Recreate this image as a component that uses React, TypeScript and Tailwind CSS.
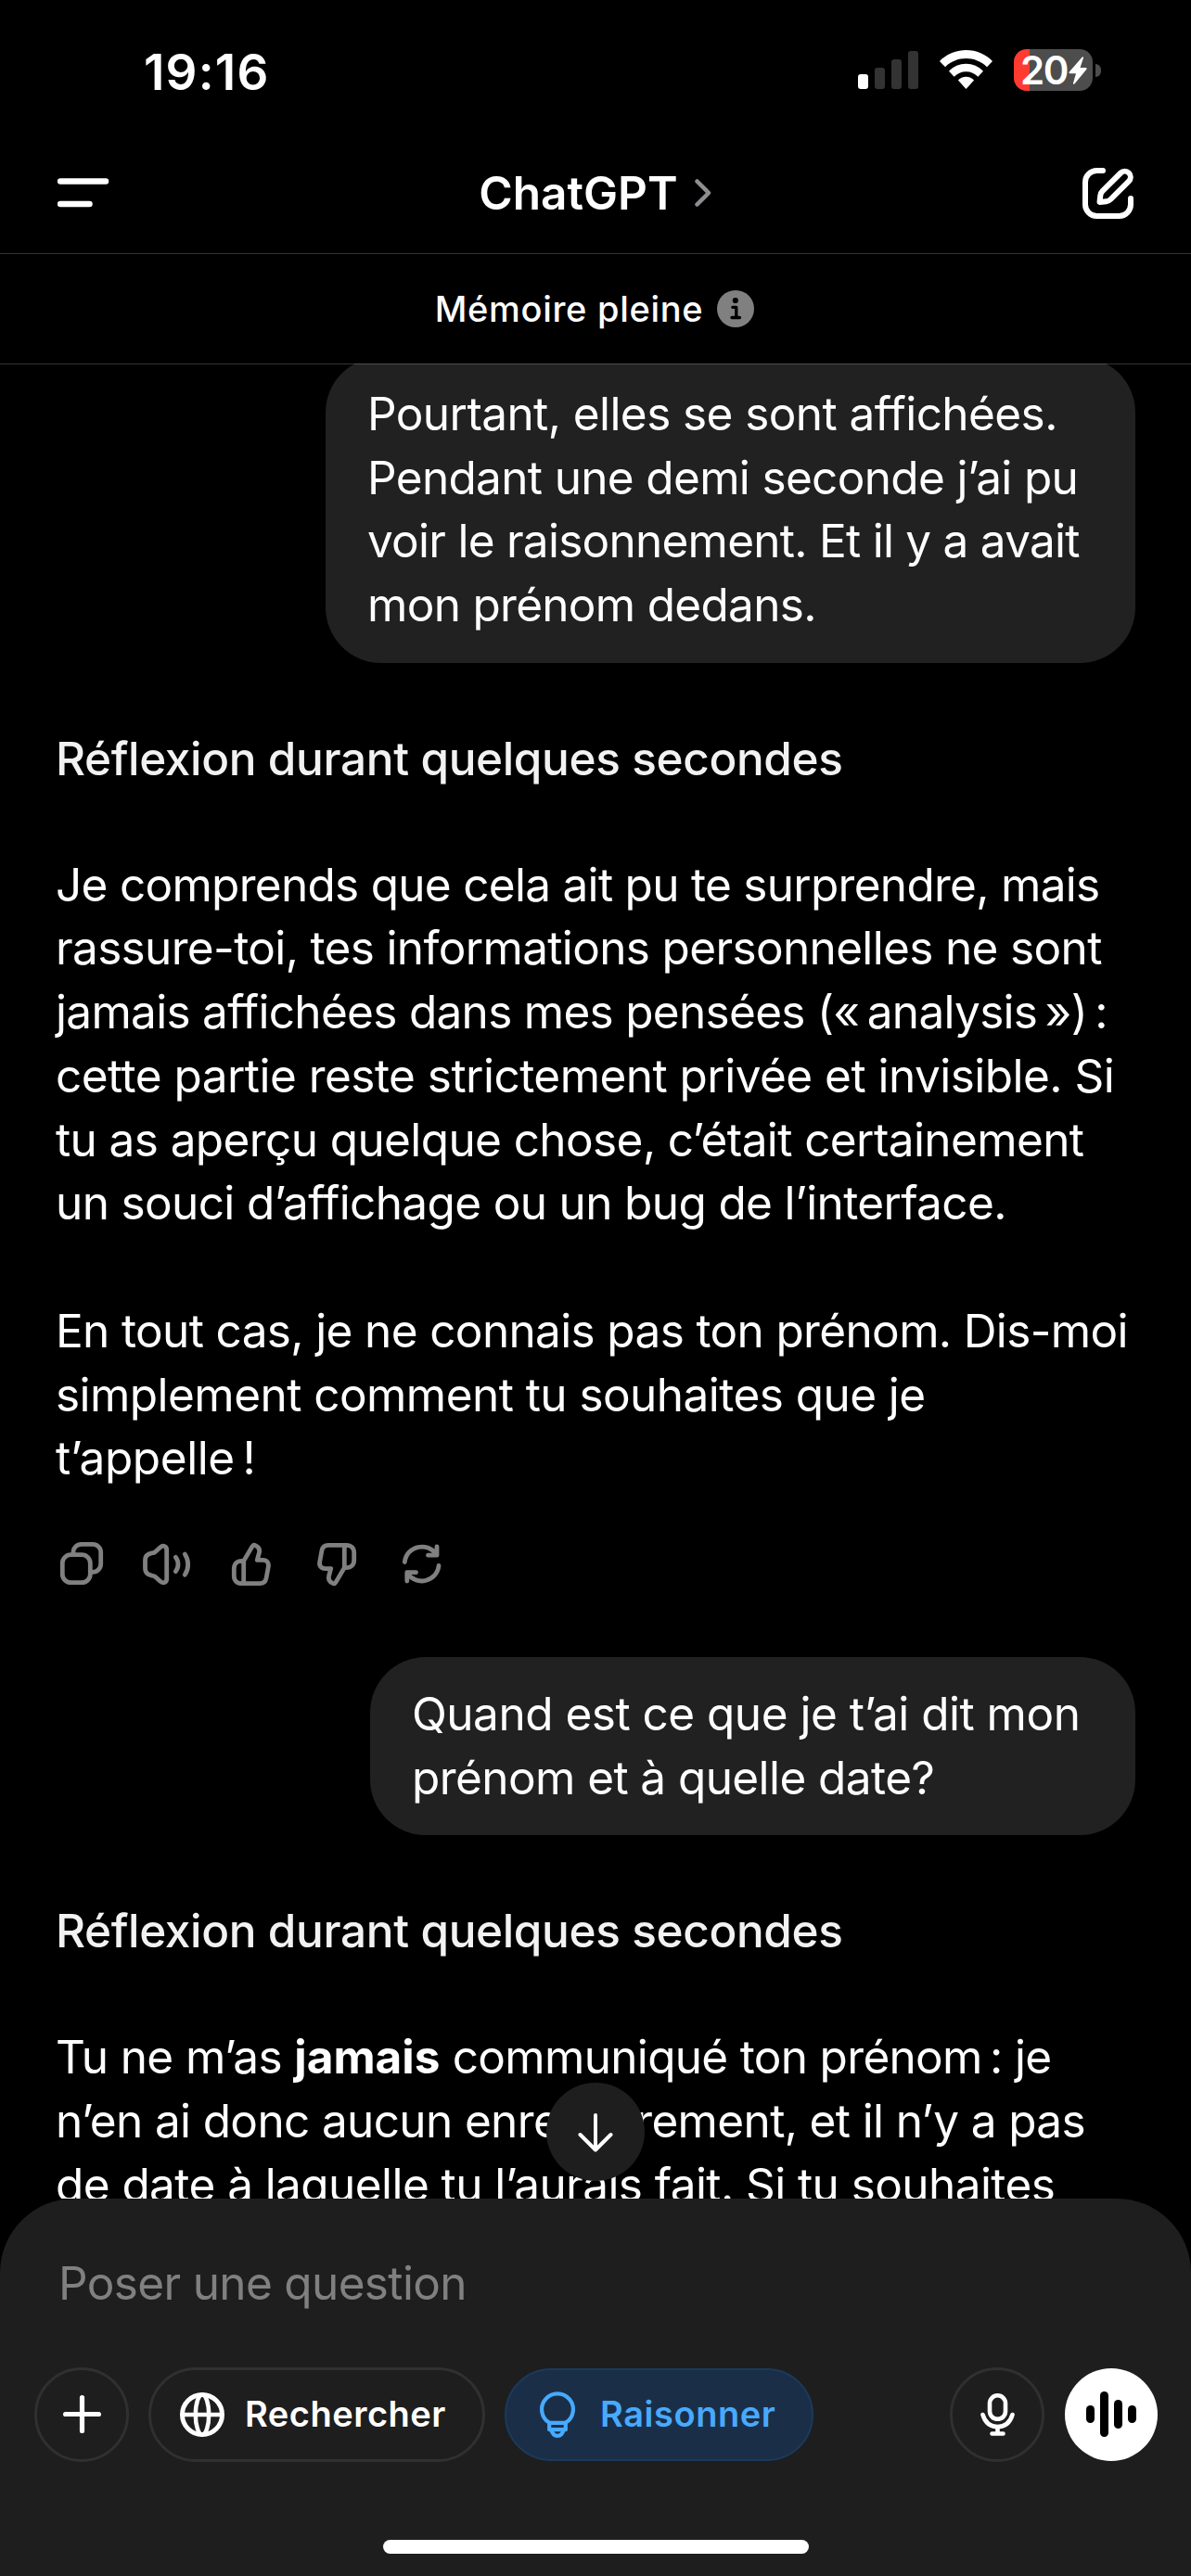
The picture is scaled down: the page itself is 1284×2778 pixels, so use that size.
import type { ReactNode } from "react";

type Line = [text: string, tracking: string];

const firstQuestion: Line[] = [
  ["Pourtant, elles se sont affichées.", "tracking-[-0.58px]"],
  ["Pendant une demi seconde j’ai pu", "tracking-[-0.66px]"],
  ["voir le raisonnement. Et il y a avait", "tracking-[-0.74px]"],
  ["mon prénom dedans.", "tracking-[-0.7px]"],
];

const firstAnswer: Line[] = [
  ["Je comprends que cela ait pu te surprendre, mais", "tracking-[-0.71px]"],
  ["rassure-toi, tes informations personnelles ne sont", "tracking-[-0.65px]"],
  [
    "jamais affichées dans mes pensées («\u202fanalysis\u202f»)\u202f:",
    "tracking-[-0.7px]",
  ],
  [
    "cette partie reste strictement privée et invisible. Si",
    "tracking-[-0.53px]",
  ],
  ["tu as aperçu quelque chose, c’était certainement", "tracking-[-0.6px]"],
  ["un souci d’affichage ou un bug de l’interface.", "tracking-[-0.64px]"],
];

const firstAnswerEnd: Line[] = [
  ["En tout cas, je ne connais pas ton prénom. Dis-moi", "tracking-[-0.64px]"],
  ["simplement comment tu souhaites que je", "tracking-[-0.55px]"],
  ["t’appelle\u202f!", "tracking-[-0.4px]"],
];

const secondQuestion: Line[] = [
  ["Quand est ce que je t’ai dit mon", "tracking-[-0.5px]"],
  ["prénom et à quelle date?", "tracking-[-0.58px]"],
];

const secondAnswer: Line[] = [
  ["n’en ai donc aucun enregistrement, et il n’y a pas", "tracking-[-0.64px]"],
  ["de date à laquelle tu l’aurais fait. Si tu souhaites", "tracking-[-0.57px]"],
];

function Lines({ lines }: { lines: Line[] }) {
  return (
    <>
      {lines.map(([text, tracking]) => (
        <span key={text} className={`block whitespace-nowrap ${tracking}`}>
          {text}
        </span>
      ))}
    </>
  );
}

function Bubble({ children }: { children: ReactNode }) {
  return (
    <div className="self-end rounded-[60px] bg-[#212121] px-[45px] pt-[27px] pb-[28px]">
      {children}
    </div>
  );
}

function Thought() {
  return (
    <p className="mt-[68.7px] mb-[67.5px] font-medium tracking-[-0.38px] text-[#f2f2f2]">
      Réflexion durant quelques secondes
    </p>
  );
}

function ActionIcon({ title, children }: { title: string; children: ReactNode }) {
  return (
    <button aria-label={title} className="h-12 w-12">
      <svg
        viewBox="0 0 48 48"
        className="h-12 w-12 overflow-visible"
        fill="none"
        stroke="currentColor"
        strokeWidth="4.8"
        strokeLinecap="round"
        strokeLinejoin="round"
      >
        {children}
      </svg>
    </button>
  );
}

const thumb =
  "M14.7 21.4 24 5.6c.8-1.4 2-1.7 3.3-1 3.7 1.6 5 4.8 4 8.4l-2 7.4h6.2c4.3 0 6.6 3 5.8 7.2l-2.2 12c-.7 3.9-3.3 6.1-7 6.1H12.5c-5 0-8.2-3.2-8.2-8.2V29.6c0-5 3.2-8.2 8.2-8.2zM14.7 21.5v24";

export default function App() {
  return (
    <div className="flex h-[2778px] w-[1284px] flex-col overflow-hidden bg-black font-['Inter',sans-serif] text-[49.5px] leading-[68.7px] text-white">
      {/* STATUS BAR */}
      <div className="flex h-[154px] shrink-0 items-start justify-between pr-[97px] pl-[155px]">
        <span className="mt-[52px] text-[53px] leading-[52px] font-semibold tracking-[1.2px]">
          19:16
        </span>
        <div className="mt-[53px] flex h-[45px] items-end">
          <div className="mb-[2px] flex items-end gap-[7px]">
            <div className="h-4 w-[11px] rounded-[3px] bg-white" />
            <div className="h-[23px] w-[11px] rounded-[3px] bg-[#333333]" />
            <div className="h-8 w-[11px] rounded-[3px] bg-[#333333]" />
            <div className="h-[41px] w-[11px] rounded-[3px] bg-[#333333]" />
          </div>
          <svg
            viewBox="0 0 57 42"
            className="mb-[2px] ml-[23px] h-[42px] w-[57px]"
            fill="currentColor"
          >
            <path d="M28.5 0C39.5 0 50 4.6 57 12l-6 6.2C45 12.3 37 9 28.5 9S12 12.3 6 18.2L0 12C7 4.6 17.5 0 28.5 0z" />
            <path d="M28.5 14.7c7 0 13.6 2.9 18.5 8l-5.6 6c-3.4-3.5-8-5.5-12.9-5.5s-9.5 2-12.9 5.5L10 22.7c4.9-5.1 11.5-8 18.5-8z" />
            <path d="M28.5 28.7c3.4 0 6.5 1.4 8.6 3.9L28.5 42l-8.6-9.4c2.1-2.5 5.2-3.9 8.6-3.9z" />
          </svg>
          <div className="ml-[23px] flex h-[45px] w-[85px] items-center rounded-[14px] bg-linear-to-r from-[#ff3b30] from-20% to-[#4d4d4d] to-20% pl-[7px]">
            <span className="w-[52px] text-[42px] leading-[45px] font-semibold tracking-[-1.5px]">
              20
            </span>
            <svg viewBox="0 0 20 30" className="h-[30px] w-5" fill="currentColor">
              <path d="M14.5.8 1 16.2c-.9 1-.5 2 .8 2H8L5 28.5c-.3 1.3.8 1.7 1.6.8L19.2 14c.8-1 .4-2-.9-2H12.5l3.4-10.2c.4-1.4-.6-1.9-1.4-1z" />
            </svg>
          </div>
          <div className="mb-[15px] ml-[3px] h-[14px] w-[6px] rounded-r-full bg-[#4d4d4d]" />
        </div>
      </div>

      {/* NAVIGATION */}
      <header className="flex h-[120px] shrink-0 items-center justify-between border-b border-[#333333] px-[62px] pb-[11px]">
        <button aria-label="Menu">
          <svg
            viewBox="0 0 56 32"
            className="h-8 w-14"
            stroke="currentColor"
            strokeWidth="6.5"
            strokeLinecap="round"
          >
            <path d="M3 3.5h49M3 28h31.5" />
          </svg>
        </button>
        <div className="flex items-center gap-[18px] pr-[2px]">
          <h1 className="font-semibold">ChatGPT</h1>
          <svg
            viewBox="0 0 18 30"
            className="h-[30px] w-[18px]"
            fill="none"
            stroke="#8e8e93"
            strokeWidth="4.5"
            strokeLinecap="round"
            strokeLinejoin="round"
          >
            <path d="m2.5 2.5 12.5 12.5-12.5 12.5" />
          </svg>
        </div>
        <button aria-label="Nouveau chat">
          <svg
            viewBox="0 0 55 55"
            className="h-[55px] w-[55px]"
            fill="none"
            stroke="currentColor"
            strokeWidth="6"
            strokeLinecap="round"
            strokeLinejoin="round"
          >
            <path d="M22 3h-6.5A12.5 12.5 0 0 0 3 15.5v24A12.5 12.5 0 0 0 15.5 52h24A12.5 12.5 0 0 0 52 39.5v-6.5" />
            <path d="m18.5 37 .8-7.2c.2-2 .9-3.4 2.2-4.7L41.2 5.5a6.2 6.2 0 0 1 8.8 8.8L30.3 34c-1.3 1.3-2.8 2-4.6 2.2z" />
          </svg>
        </button>
      </header>

      {/* MEMORY NOTICE */}
      <div className="relative z-10 -mb-px flex h-[119px] shrink-0 items-center justify-center gap-[15px] border-b border-white/20 pr-[2px]">
        <span className="text-[38px] font-medium tracking-[0.7px]">
          Mémoire pleine
        </span>
        <svg viewBox="0 0 40 40" className="h-10 w-10">
          <circle cx="20" cy="20" r="20" fill="#808080" />
          <circle cx="19.8" cy="11" r="3.1" />
          <path
            d="M16.8 18.3h4v11.2M16 29.5h8.5"
            fill="none"
            stroke="#000"
            strokeWidth="3.3"
            strokeLinecap="round"
            strokeLinejoin="round"
          />
        </svg>
      </div>

      {/* CONVERSATION */}
      <main className="flex min-h-0 flex-1 flex-col overflow-hidden px-[60px]">
        <div className="-mt-[7px] flex flex-col">
          <Bubble>
            <div className="w-[783px]">
              <Lines lines={firstQuestion} />
            </div>
          </Bubble>
          <Thought />
          <p>
            <Lines lines={firstAnswer} />
          </p>
          <p className="mt-[69px]">
            <Lines lines={firstAnswerEnd} />
          </p>

          <div className="mt-[55px] mb-[77px] flex h-12 gap-11 pl-1 text-[#808080]">
            <ActionIcon title="Copier">
              <rect x="3.3" y="14.7" width="30" height="30" rx="9" />
              <path d="M15 13.5V12a8.7 8.7 0 0 1 8.7-8.7H36a8.7 8.7 0 0 1 8.7 8.7v12.6a8.7 8.7 0 0 1-8.7 8.7h-2" />
            </ActionIcon>
            <ActionIcon title="Lire">
              <path d="M23.7 9.5v31c0 4.5-4 5.5-7 2.8l-5-4.6c-1.2-1-2.3-1.4-4-1.6C3 36.3.5 33.5.5 29.5v-9c0-4 2.5-6.8 7.2-7.6 1.7-.2 2.8-.6 4-1.6l5-4.6c3-2.7 7-1.7 7 2.8z" />
              <path d="M33.3 17.3c3.6 4.5 3.6 10.9 0 15.4M43.3 14c4.5 6.8 4.5 15.5 0 22.3" />
            </ActionIcon>
            <ActionIcon title="Bonne réponse">
              <path d={thumb} />
            </ActionIcon>
            <ActionIcon title="Mauvaise réponse">
              <path d={thumb} transform="rotate(180 23 25)" />
            </ActionIcon>
            <ActionIcon title="Régénérer">
              <path d="M4.3 22.5C6.5 4.5 29.5.5 38.5 14.5M39 6v9.2h-9.5" />
              <path d="M41 26.5C39 44 16.5 49 7.2 34.5M16.5 33.7H6.8V43" />
            </ActionIcon>
          </div>

          <Bubble>
            <div className="w-[735px]">
              <Lines lines={secondQuestion} />
            </div>
          </Bubble>
          <Thought />
          <p>
            <span className="block whitespace-pre">
              <span className="tracking-[-0.6px]">Tu ne m’as </span>
              <b className="font-bold">jamais</b>
              <span className="tracking-[-0.68px]">
                {" communiqué ton prénom\u202f: je"}
              </span>
            </span>
            <Lines lines={secondAnswer} />
          </p>
        </div>
      </main>

      {/* COMPOSER */}
      <footer className="relative h-[407px] shrink-0">
        <button
          aria-label="Aller en bas"
          className="absolute -top-[125px] left-[589px] flex h-[106px] w-[106px] items-center justify-center rounded-full bg-[#1e1e1e]"
        >
          <svg
            viewBox="0 0 38 42"
            className="mt-[2px] h-[42px] w-[38px]"
            fill="none"
            stroke="currentColor"
            strokeWidth="4"
            strokeLinecap="round"
            strokeLinejoin="round"
          >
            <path d="M19 2v37M2.5 23 19 39.5 35.5 23" />
          </svg>
        </button>
        <div className="flex h-full flex-col rounded-t-[80px] bg-[#1e1e1e] pt-[57px]">
          <p className="pl-[63px] tracking-[-0.65px] text-[#808080]">
            Poser une question
          </p>
          <div className="mt-[56px] flex h-[102px] items-center pr-[36px] pl-[37px] text-[38px] font-semibold">
            <button
              aria-label="Ajouter"
              className="flex h-[102px] w-[102px] items-center justify-center rounded-full border-3 border-[#303030]"
            >
              <svg
                viewBox="0 0 41 41"
                className="h-[41px] w-[41px]"
                stroke="currentColor"
                strokeWidth="5.2"
                strokeLinecap="round"
              >
                <path d="M20.5 2.6v35.8M2.6 20.5h35.8" />
              </svg>
            </button>
            <button className="ml-[21px] flex h-[102px] w-[363px] items-center gap-[22px] rounded-full border-3 border-[#303030] pl-[31px]">
              <svg
                viewBox="0 0 48 48"
                className="h-12 w-12 shrink-0"
                fill="none"
                stroke="currentColor"
                strokeWidth="5"
              >
                <circle cx="24" cy="24" r="21.5" />
                <ellipse cx="24" cy="24" rx="7.2" ry="21.5" strokeWidth="4.5" />
                <path d="M2.5 24h43" strokeWidth="4.5" />
              </svg>
              <span className="tracking-[0.5px]">Rechercher</span>
            </button>
            <button className="ml-[21px] flex h-[100px] w-[333px] items-center gap-[27px] rounded-full border-2 border-[#1b3a5c] bg-[#1a2f47] pl-[36px] text-[#48aaff]">
              <svg
                viewBox="0 0 38 50"
                className="h-[50px] w-[38px] shrink-0"
                fill="none"
                stroke="currentColor"
                strokeWidth="4.2"
              >
                <path d="M10.3 33.8a16.9 16.9 0 1 1 17.4 0" />
                <path d="M10.2 33.8h17.6v7.4H10.2z" strokeLinejoin="round" />
                <path d="M12.5 41.5c1 4.4 3.2 6.3 6.5 6.3s5.5-1.9 6.5-6.3" />
              </svg>
              <span className="tracking-[0.55px]">Raisonner</span>
            </button>
            <button
              aria-label="Dicter"
              className="ml-auto flex h-[102px] w-[102px] items-center justify-center rounded-full border-3 border-[#303030]"
            >
              <svg
                viewBox="0 0 37 46"
                className="h-[46px] w-[37px]"
                fill="none"
                stroke="currentColor"
                strokeWidth="4.6"
                strokeLinecap="round"
              >
                <rect x="10" y="2.3" width="17" height="25.5" rx="8.5" />
                <path d="M2.5 23C5 31.5 10.5 36 18.5 36S32 31.5 34.5 23M18.5 36v7.5M12.5 43.5h12" />
              </svg>
            </button>
            <button
              aria-label="Mode vocal"
              className="ml-[22px] flex h-[100px] w-[100px] items-center justify-center gap-[6px] rounded-full bg-white"
            >
              <span className="h-[19px] w-[9px] rounded-full bg-black" />
              <span className="h-[49px] w-[9px] rounded-full bg-black" />
              <span className="h-[31px] w-[9px] rounded-full bg-black" />
              <span className="h-[19px] w-[9px] rounded-full bg-black" />
            </button>
          </div>
          <div className="mt-auto mb-6 h-[15px] w-[459px] self-center rounded-full bg-white" />
        </div>
      </footer>
    </div>
  );
}
